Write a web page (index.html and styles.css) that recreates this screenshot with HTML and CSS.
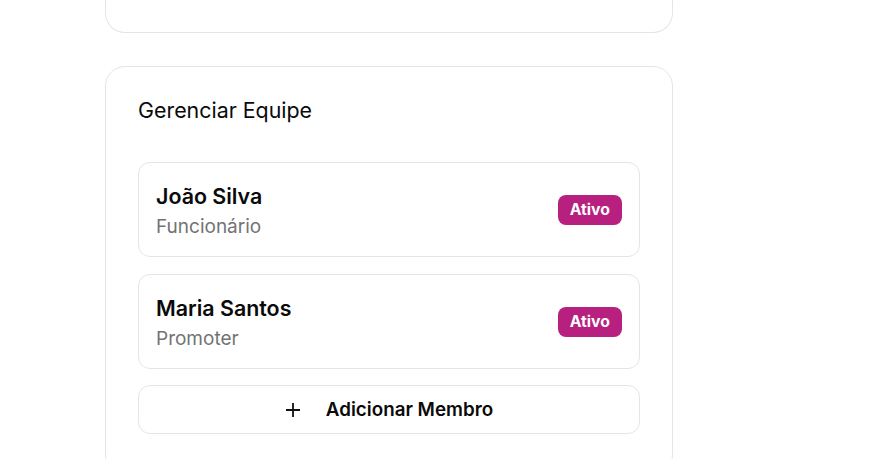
FILE: index.html
```html
<!DOCTYPE html>
<html lang="pt">
<head>
<meta charset="utf-8">
<link rel="stylesheet" href="styles.css">
</head>
<body>
<div class="page">
  <div class="card card-top"></div>
  <section class="card team">
    <h2 class="title">Gerenciar Equipe</h2>
    <div class="list">
      <div class="member">
        <div class="info">
          <div class="name">João Silva</div>
          <div class="role">Funcionário</div>
        </div>
        <span class="badge">Ativo</span>
      </div>
      <div class="member">
        <div class="info">
          <div class="name">Maria Santos</div>
          <div class="role">Promoter</div>
        </div>
        <span class="badge">Ativo</span>
      </div>
      <button class="add">
        <svg class="plus" width="16" height="16" viewBox="0 0 16 16"><path d="M8 1v14M1 8h14" stroke="#111" stroke-width="1.8" fill="none"/></svg>
        <span>Adicionar Membro</span>
      </button>
    </div>
  </section>
</div>
</body>
</html>
```
FILE: styles.css
```css
html, body { margin: 0; padding: 0; background: #fff; }
body { font-family: Inter, "Noto Sans", sans-serif; color: #0a0a0a; }
.page { width: 568px; margin-left: 105px; display: flex; flex-direction: column; gap: 33px; }
.card { border: 1px solid #e5e5e5; border-radius: 20px; background: #fff; box-sizing: border-box; }
.card-top { height: 33px; border-top: none; border-radius: 0 0 20px 20px; }
.team { padding: 32px 32px 40px; }
.title { margin: 0 0 41px; font-size: 21.4px; font-weight: 400; line-height: 22px; }
.list { display: flex; flex-direction: column; gap: 17px; }
.member { border: 1px solid #e5e5e5; border-radius: 12px; padding: 0 17px; display: flex; align-items: center; justify-content: space-between; height: 95px; box-sizing: border-box; }
.info { padding-top: 2px; }
.name { font-size: 21.4px; font-weight: 600; line-height: 28px; }
.role { font-size: 19px; color: #737373; line-height: 24px; margin-top: 5px; }
.badge { background: #b8207f; color: #fff; font-weight: 700; font-size: 15.8px; border-radius: 8px; padding: 0 12px; height: 30px; line-height: 30px; }
.add { height: 49px; margin-top: -1px; border: 1px solid #e5e5e5; border-radius: 12px; background: #fff; display: flex; align-items: center; justify-content: center; gap: 25px; font-family: inherit; font-size: 18.8px; font-weight: 600; color: #0a0a0a; padding: 0; }
.plus { display: block; }
```
